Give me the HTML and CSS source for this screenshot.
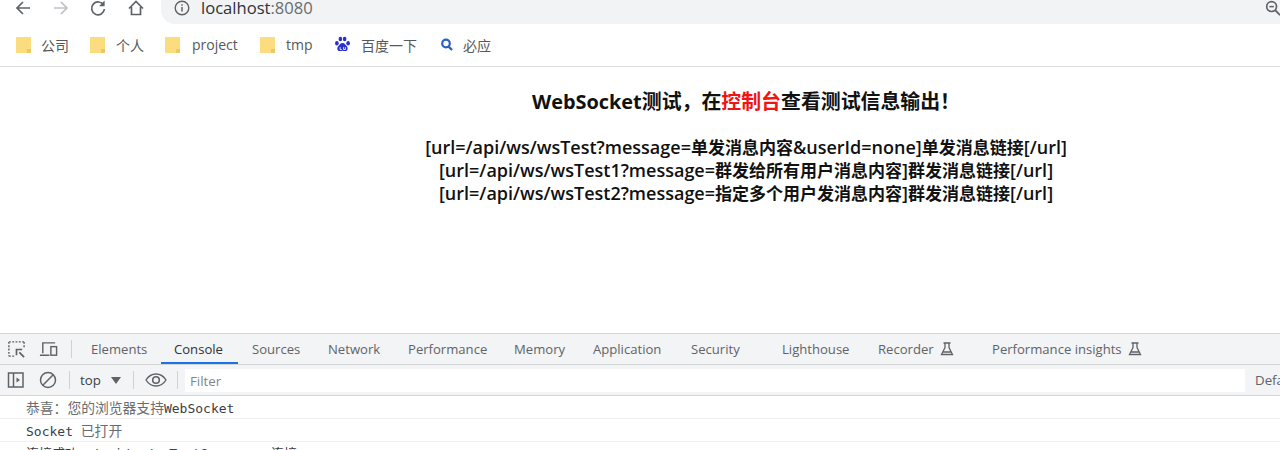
FILE: index.html
```html
<!DOCTYPE html>
<html lang="zh-CN">
<head>
<meta charset="utf-8">
<title>WebSocket</title>
<link rel="stylesheet" href="styles.css">
</head>
<body>
<div class="browser">
  <header class="toolbar">
    <div class="nav">
      <svg class="nav-ico" viewBox="0 0 18 18"><path d="M16 9H3M9 3L3 9l6 6" fill="none" stroke="#5f6368" stroke-width="1.7"/></svg>
      <svg class="nav-ico" viewBox="0 0 18 18"><path d="M2 9h13M9 3l6 6-6 6" fill="none" stroke="#bdc1c6" stroke-width="1.7"/></svg>
      <svg class="nav-ico" viewBox="0 0 18 18"><path d="M14.6 6.2A6.4 6.4 0 1 0 15.4 10" fill="none" stroke="#5f6368" stroke-width="1.7"/><path d="M15.6 1.6v5.6H10z" fill="#5f6368"/></svg>
      <svg class="nav-ico" viewBox="0 0 18 18"><path d="M2 9.5L9 2.5l7 7M4.5 8v7.5h9V8" fill="none" stroke="#5f6368" stroke-width="1.7"/></svg>
    </div>
    <div class="omnibox">
      <svg class="info" viewBox="0 0 16 16"><circle cx="8" cy="8" r="6.8" fill="none" stroke="#5f6368" stroke-width="1.4"/><path d="M8 7v4.5M8 4.2v1.6" stroke="#5f6368" stroke-width="1.5"/></svg>
      <span class="host">localhost</span><span class="port">:8080</span>
      <svg class="zoom-ico" viewBox="0 0 18 18"><circle cx="7" cy="7" r="5.2" fill="none" stroke="#5f6368" stroke-width="1.8"/><path d="M4.6 7h4.8" stroke="#5f6368" stroke-width="1.6"/><path d="M11 11l5 5" stroke="#5f6368" stroke-width="2"/></svg>
    </div>
  </header>
  <nav class="bookmarks">
    <a class="bm bm-a"><svg class="folder" viewBox="0 0 15 18"><path d="M0 1h15v16H0z" fill="#fbdc7f"/><path d="M11 13h4v4h-4z" fill="#eec765"/></svg>公司</a>
    <a class="bm bm-b"><svg class="folder" viewBox="0 0 15 18"><path d="M0 1h15v16H0z" fill="#fbdc7f"/><path d="M11 13h4v4h-4z" fill="#eec765"/></svg>个人</a>
    <a class="bm bm-c"><svg class="folder" viewBox="0 0 15 18"><path d="M0 1h15v16H0z" fill="#fbdc7f"/><path d="M11 13h4v4h-4z" fill="#eec765"/></svg>project</a>
    <a class="bm bm-d"><svg class="folder" viewBox="0 0 15 18"><path d="M0 1h15v16H0z" fill="#fbdc7f"/><path d="M11 13h4v4h-4z" fill="#eec765"/></svg>tmp</a>
    <a class="bm bm-e"><svg class="fav fav-baidu" viewBox="0 0 16 16" fill="#2932c8"><ellipse cx="2.700" cy="6.800" rx="1.700" ry="2.200"/><ellipse cx="6" cy="2.800" rx="1.700" ry="2.200"/><ellipse cx="10" cy="2.800" rx="1.700" ry="2.200"/><ellipse cx="13.300" cy="6.800" rx="1.700" ry="2.200"/><path d="M8 6.500c2 0 2.600 1.800 3.800 2.800 1.600 1.300 1.500 4.800-1.200 4.900-1 0-1.700-.4-2.600-.4s-1.700.4-2.600.4c-2.700-.1-2.800-3.600-1.200-4.900C5.400 8.300 6 6.500 8 6.500z"/><path d="M5.800 10.500v2.200h1.500M9 10.500v2.200h1.700v-2.200" fill="none" stroke="#fff" stroke-width=".8"/></svg>百度一下</a>
    <a class="bm bm-f"><svg class="fav" viewBox="0 0 16 16"><circle cx="7" cy="6.500" r="3.800" fill="none" stroke="#2b5fc4" stroke-width="2.200"/><path d="M9.500 9.500l3.500 3.500" stroke="#2b5fc4" stroke-width="2.400"/></svg>必应</a>
  </nav>
  <main class="page">
    <h2 class="title">WebSocket测试，在<span class="red">控制台</span>查看测试信息输出！</h2>
    <h3 class="links">
      <span>[url=/api/ws/wsTest?message=<b class="hz">单发消息内容</b>&amp;userId=none]<b class="hz">单发消息链接</b>[/url]</span>
      <span>[url=/api/ws/wsTest1?message=<b class="hz">群发给所有用户消息内容</b>]<b class="hz">群发消息链接</b>[/url]</span>
      <span>[url=/api/ws/wsTest2?message=<b class="hz">指定多个用户发消息内容</b>]<b class="hz">群发消息链接</b>[/url]</span>
    </h3>
  </main>
  <section class="devtools">
    <div class="tabs">
      <svg class="dt-ico" viewBox="0 0 20 20"><path d="M2 2h16M2 2v15M18 2v6M2 17h6" fill="none" stroke="#5f6368" stroke-width="1.500" stroke-dasharray="2 1.500"/><path d="M18 18l-5-5M10 16v-6h6" fill="none" stroke="#5f6368" stroke-width="1.800"/></svg>
      <svg class="dt-ico dt-device" viewBox="0 0 20 20"><path d="M4 14V3h13M1 16h10" fill="none" stroke="#5f6368" stroke-width="1.500"/><rect x="12.500" y="7" width="6" height="9" fill="none" stroke="#5f6368" stroke-width="1.500"/></svg>
      <i class="sep sep-tabs"></i>
      <span class="tab t-el">Elements</span>
      <span class="tab t-co active">Console</span>
      <span class="tab t-so">Sources</span>
      <span class="tab t-ne">Network</span>
      <span class="tab t-pe">Performance</span>
      <span class="tab t-me">Memory</span>
      <span class="tab t-ap">Application</span>
      <span class="tab t-se">Security</span>
      <span class="tab t-li">Lighthouse</span>
      <span class="tab t-re">Recorder<svg class="flask" viewBox="0 0 14 14"><path d="M3.500 1h7M5 1v4.500L1.500 12.500h11L9 5.500V1M3 10h8" fill="none" stroke="#5f6368" stroke-width="1.300"/></svg></span>
      <span class="tab t-pi">Performance insights<svg class="flask" viewBox="0 0 14 14"><path d="M3.500 1h7M5 1v4.500L1.500 12.500h11L9 5.500V1M3 10h8" fill="none" stroke="#5f6368" stroke-width="1.300"/></svg></span>
    </div>
    <div class="filterbar">
      <svg class="fb-ico" viewBox="0 0 18 18"><rect x="1.500" y="2" width="14.500" height="14" fill="none" stroke="#5f6368" stroke-width="1.500"/><path d="M6.500 2v14" stroke="#5f6368" stroke-width="1.500"/><path d="M9.500 6.500L13 9l-3.500 2.500z" fill="#5f6368"/></svg>
      <svg class="fb-ico fb-block" viewBox="0 0 18 18"><circle cx="9" cy="9" r="7.500" fill="none" stroke="#5f6368" stroke-width="1.500"/><path d="M3.800 14.200L14.200 3.800" stroke="#5f6368" stroke-width="1.500"/></svg>
      <i class="sep sep-a"></i>
      <span class="ctx">top</span>
      <i class="caret"></i>
      <i class="sep sep-b"></i>
      <svg class="eye" viewBox="0 0 22 14"><path d="M1 7c3-4.800 6.500-6 10-6s7 1.200 10 6c-3 4.800-6.500 6-10 6S4 11.800 1 7z" fill="none" stroke="#5f6368" stroke-width="1.400"/><circle cx="11" cy="7" r="3.300" fill="none" stroke="#5f6368" stroke-width="1.600"/></svg>
      <i class="sep sep-c"></i>
      <div class="filter">Filter</div>
      <span class="levels">Defa</span>
    </div>
    <div class="console">
      <div class="msg"><span class="cn">恭喜：您的浏览器支持</span>WebSocket</div>
      <div class="msg">Socket <span class="cn">已打开</span></div>
      <div class="msg">连接成功：/api/ws/wsTest?message=连接</div>
    </div>
  </section>
</div>
</body>
</html>
```
FILE: styles.css
```css
* { box-sizing: border-box; }
html, body { margin: 0; height: 100%; overflow: hidden; background: #fff; }
body { font-family: "Open Sans", "Noto Sans CJK SC", sans-serif; color: #202124; }
svg { display: block; flex: none; }
.browser { width: 1280px; height: 450px; display: flex; flex-direction: column; overflow: hidden; }

.toolbar { height: 24px; display: flex; flex: none; }
.nav { width: 161px; display: flex; gap: 19.500px; padding: 0 0 7px 14px; align-items: flex-end; flex: none; }
.nav-ico { width: 18px; height: 18px; }
.omnibox { flex: 1; background: #f1f3f4; border-bottom-left-radius: 14px; display: flex; align-items: center; padding: 0 0 8px 13px; font-size: 16.600px; line-height: 20px; }
.info { width: 16px; height: 16px; margin-right: 11px; }
.host { color: #303134; }
.port { color: #6a6d70; }
.zoom-ico { width: 17px; height: 17px; margin-left: auto; margin-right: -2px; }

.bookmarks { height: 43px; flex: none; display: flex; align-items: center; padding-left: 16px; border-bottom: 1px solid #dcdddf; font-size: 14px; color: #55585c; padding-bottom: 1px; }
.bm { display: flex; align-items: center; white-space: nowrap; }
.folder { width: 15px; height: 18px; margin-right: 11px; }
.bm-a .folder { margin-right: 10px; }
.bm-c .folder { margin-right: 12px; }
.fav { width: 16px; height: 16px; margin-right: 8px; }
.fav-baidu { width: 17px; height: 17px; margin-right: 10px; }
.bm-a { width: 74px; }
.bm-b { width: 75px; }
.bm-c { width: 95px; }
.bm-d { width: 74px; }
.bm-e { width: 105px; }

.page { height: 266px; flex: none; display: flex; flex-direction: column; align-items: center; padding: 22px 0 0 212px; color: #111; }
.title { margin: 0; font-size: 19.900px; line-height: 26px; font-weight: 700; }
.red { color: #f01414; }
.links { margin: 21px 0 0; display: flex; flex-direction: column; align-items: center; font-size: 18px; line-height: 23px; font-weight: 600; white-space: nowrap; }
.hz { font-size: 17px; font-weight: 700; }

.devtools { flex: 1; display: flex; flex-direction: column; border-top: 1px solid #d4d5d7; min-height: 0; }
.tabs { height: 31px; flex: none; background: #f3f4f5; display: flex; align-items: center; font-size: 13.100px; color: #5f6368; border-bottom: 1px solid #d4d5d7; padding-left: 7px; }
.dt-ico { width: 19px; height: 19px; }
.dt-device { margin-left: 13px; }
.sep { display: block; width: 1px; height: 18px; background: #cfd1d3; flex: none; }
.sep-tabs { margin-left: 13px; }
.tab { height: 30px; display: flex; align-items: center; flex: none; white-space: nowrap; }
.tab.active { color: #303134; box-shadow: inset 0 -2px 0 #1a73e8; padding-left: 13px; }
.t-el { margin-left: 19px; width: 70px; }
.t-co { width: 77px; }
.t-so { margin-left: 14px; width: 76px; }
.t-ne { width: 80px; }
.t-pe { width: 106px; }
.t-me { width: 79px; }
.t-ap { width: 98px; }
.t-se { width: 91px; }
.t-li { width: 96px; }
.t-re { width: 114px; }
.flask { width: 14px; height: 14px; margin-left: 6px; }

.filterbar { height: 31px; flex: none; background: #f3f4f5; display: flex; align-items: center; padding-left: 7px; font-size: 13.300px; color: #5f6368; border-bottom: 1px solid #d4d5d7; }
.fb-ico { width: 18px; height: 18px; }
.fb-block { margin-left: 14px; }
.sep-a { margin-left: 12px; }
.ctx { margin-left: 10px; width: 31px; flex: none; color: #3c4043; }
.caret { width: 0; height: 0; border-left: 5px solid transparent; border-right: 5px solid transparent; border-top: 7px solid #5f6368; flex: none; }
.sep-b { margin-left: 12px; }
.eye { width: 22px; height: 14px; margin-left: 11px; }
.sep-c { margin-left: 10px; }
.filter { margin-left: 7px; flex: none; width: 1060px; height: 23px; background: #fff; color: #80868b; line-height: 25px; padding-left: 5px; }
.levels { margin-left: 10px; flex: none; white-space: nowrap; }

.console { flex: 1; min-height: 0; overflow: hidden; font-family: "DejaVu Sans Mono", "Noto Sans CJK SC", monospace; font-size: 13px; color: #3c4043; }
.msg { height: 23px; line-height: 24px; padding-left: 26px; border-bottom: 1px solid #f0f0f0; white-space: nowrap; }
.cn { font-size: 13.800px; color: #6a6d70; }
```
